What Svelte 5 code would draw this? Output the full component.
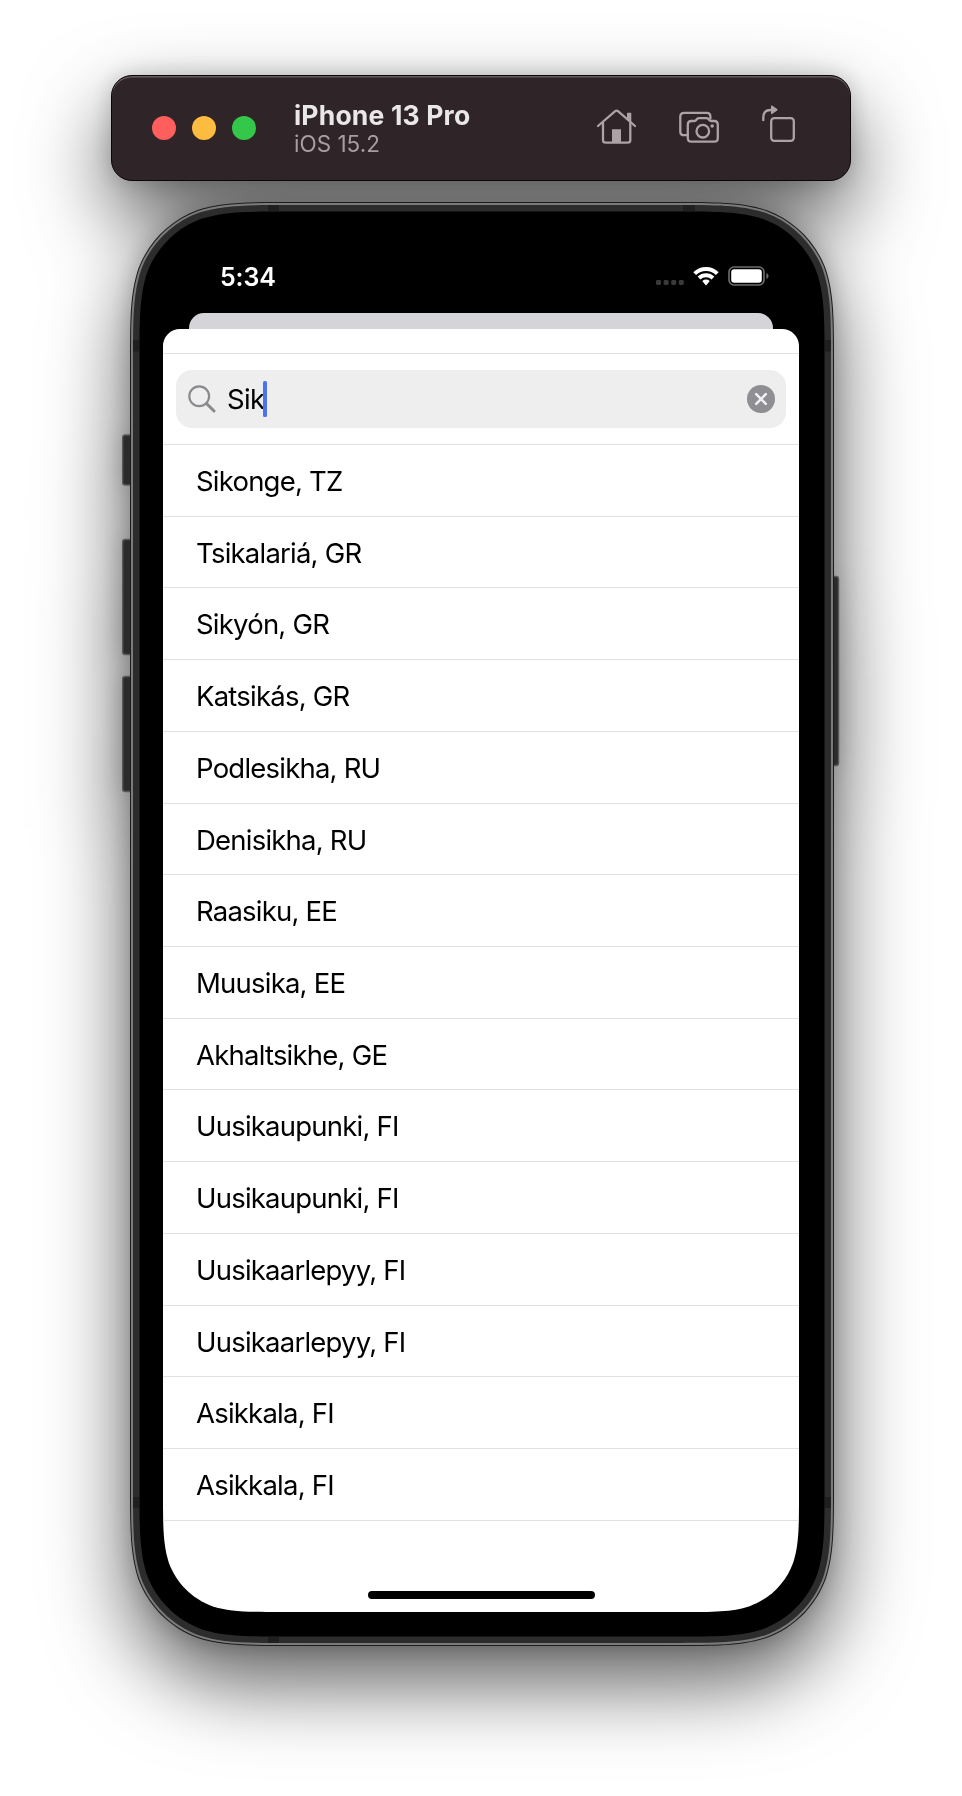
<script>
  // Continuous-curvature rounded rectangle, with one radius for the top corners and one for the bottom.
  function squircle(x, y, w, h, rt, rb = rt) {
    const R = x + w;
    const B = y + h;
    const A = 1.52866498, b = 1.08849296, c = 0.86840694, d = 0.63149379, e = 0.07491139, f = 0.37282383, g = 0.16905956;
    return [
      `M${x + A * rt} ${y}L${R - A * rt} ${y}`,
      `C${R - b * rt} ${y} ${R - c * rt} ${y} ${R - d * rt} ${y + e * rt}`,
      `C${R - f * rt} ${y + g * rt} ${R - g * rt} ${y + f * rt} ${R - e * rt} ${y + d * rt}`,
      `C${R} ${y + c * rt} ${R} ${y + b * rt} ${R} ${y + A * rt}`,
      `L${R} ${B - A * rb}`,
      `C${R} ${B - b * rb} ${R} ${B - c * rb} ${R - e * rb} ${B - d * rb}`,
      `C${R - g * rb} ${B - f * rb} ${R - f * rb} ${B - g * rb} ${R - d * rb} ${B - e * rb}`,
      `C${R - c * rb} ${B} ${R - b * rb} ${B} ${R - A * rb} ${B}`,
      `L${x + A * rb} ${B}`,
      `C${x + b * rb} ${B} ${x + c * rb} ${B} ${x + d * rb} ${B - e * rb}`,
      `C${x + f * rb} ${B - g * rb} ${x + g * rb} ${B - f * rb} ${x + e * rb} ${B - d * rb}`,
      `C${x} ${B - c * rb} ${x} ${B - b * rb} ${x} ${B - A * rb}`,
      `L${x} ${y + A * rt}`,
      `C${x} ${y + b * rt} ${x} ${y + c * rt} ${x + e * rt} ${y + d * rt}`,
      `C${x + g * rt} ${y + f * rt} ${x + f * rt} ${y + g * rt} ${x + d * rt} ${y + e * rt}`,
      `C${x + c * rt} ${y} ${x + b * rt} ${y} ${x + A * rt} ${y}Z`
    ].join('');
  }

  const layers = [
    { inset: 0, r: 107, fill: '#1c1c1c' },
    { inset: 1, r: 106, fill: '#7b7b7b' },
    { inset: 3, r: 104, fill: '#2c2c2c' },
    { inset: 9.5, r: 98, fill: '#000' }
  ];

  const bands = [
    [138, 3, 11, 6], [553, 3, 12, 6], [138, 1435, 11, 6],
    [3, 138, 6, 11.5], [695, 138, 6, 11.5], [3, 1295, 6, 11], [695, 1295, 6, 11]
  ];

  const buttons = [
    [-7.3, 233, 10, 50], [-7.3, 337.5, 10, 115], [-7.3, 474.5, 10, 115], [700, 374.5, 8.5, 189]
  ];

  const cities = [
    'Sikonge, TZ', 'Tsikalariá, GR', 'Sikyón, GR', 'Katsikás, GR', 'Podlesikha, RU',
    'Denisikha, RU', 'Raasiku, EE', 'Muusika, EE', 'Akhaltsikhe, GE', 'Uusikaupunki, FI',
    'Uusikaupunki, FI', 'Uusikaarlepyy, FI', 'Uusikaarlepyy, FI', 'Asikkala, FI', 'Asikkala, FI'
  ];

  const query = 'Sik';
</script>

<main class="desktop">
  <header class="toolbar">
    <div class="lights">
      <span class="light close"></span>
      <span class="light minimise"></span>
      <span class="light zoom"></span>
    </div>
    <div class="device">
      <h1>iPhone 13 Pro</h1>
      <p>iOS 15.2</p>
    </div>
    <div class="tools">
      <svg viewBox="0 0 48 48">
        <path d="M4 22 21.2 7.2Q22.6 6.1 24 7.2L41 22" />
        <path d="M9 19V36Q9 38.7 11.7 38.7H33.6Q36.3 38.7 36.3 36V19" />
        <path class="solid" d="M18 25.2H27V39H18ZM33 9.3Q33 8.8 33.5 8.8H36.8Q37.3 8.8 37.3 9.3V19L33 15.2Z" />
      </svg>
      <svg viewBox="0 0 48 48">
        <path d="M11.5 31.2H8.2Q4.3 31.2 4.3 27.4V12.5Q4.3 8.8 8.2 8.8H30.8Q34.4 8.8 34.4 12.5V14.6" />
        <path d="M15.4 17H18.2Q19.4 17 20.2 16L21 15Q21.8 14.1 23 14.1H30.4Q31.6 14.1 32.4 15L33.2 16Q34 17 35.2 17H38.2Q41.8 17 41.8 20.6V34Q41.8 37.7 38.2 37.7H15.4Q11.8 37.7 11.8 34V20.6Q11.8 17 15.4 17Z" />
        <circle cx="26.8" cy="27.2" r="6.3" />
        <circle class="solid" cx="36.2" cy="22" r="1.8" />
      </svg>
      <svg viewBox="0 0 48 48">
        <rect x="15.2" y="14.2" width="22.6" height="22.6" rx="3" />
        <path d="M7.3 16.2V13.6Q7.3 6 14.4 6H15.5" />
        <path class="solid" d="M15 2.1Q15 1 16 1.6L21.2 5.1Q22 5.8 21.2 6.5L16 10.1Q15 10.7 15 9.6Z" />
      </svg>
    </div>
  </header>

  <section class="phone">
    <svg class="frame" viewBox="0 0 704 1444">
      {#each buttons as [x, y, w, h]}
        <rect {x} {y} width={w} height={h} rx="2.5" fill="#2b2b2b" stroke="#585858" stroke-width="1.4" />
      {/each}
      {#each layers as l}
        <path d={squircle(l.inset, l.inset, 704 - 2 * l.inset, 1444 - 2 * l.inset, l.r)} fill={l.fill} />
      {/each}
      {#each bands as [x, y, w, h]}
        <rect {x} {y} width={w} height={h} fill="#1f1f1f" />
      {/each}
    </svg>

    <div class="screen" style:clip-path={`path('${squircle(0, 0, 636, 1376, 78)}')`}>
      <div class="status">
        <span class="time">5:34</span>
        <span class="signals">
          <svg class="cell" viewBox="0 0 28 5">
            {#each [0, 7.6, 15.2, 22.8] as x}
              <rect {x} y="0" width="5" height="5" rx="1.4" />
            {/each}
          </svg>
          <svg class="wifi" viewBox="0 0 26 20">
            <path d="M1.7 7.6A16.2 16.2 0 0 1 24.3 7.6" />
            <path d="M6 12A10 10 0 0 1 20 12" />
            <path class="core" d="M9.2 15Q13 12.2 16.8 15L13.5 18.9Q13 19.5 12.5 18.9Z" />
          </svg>
          <svg class="battery" viewBox="0 0 42 20">
            <rect class="shell" x="1" y="1" width="35" height="18" rx="5" />
            <rect class="charge" x="3.2" y="3.2" width="30.6" height="13.6" rx="3" />
            <path class="nub" d="M38.4 7Q40.6 8 40.6 10T38.4 13Z" />
          </svg>
        </span>
      </div>
      <div class="back-sheet"></div>
      <div class="sheet">
        <div class="grabber"></div>
        <div class="search">
          <div class="field">
            <svg class="lens" viewBox="0 0 28 28">
              <circle cx="11.2" cy="11.2" r="9.9" />
              <path d="M18.5 18.5 26 26" />
            </svg>
            <span class="query">{query}</span>
            <span class="caret"></span>
            <svg class="clear" viewBox="0 0 28 28">
              <circle cx="14" cy="14" r="14" />
              <path d="M9.2 9.2 18.8 18.8M18.8 9.2 9.2 18.8" />
            </svg>
          </div>
        </div>
        <ul>
          {#each cities as city}
            <li>{city}</li>
          {/each}
        </ul>
        <div class="home"></div>
      </div>
    </div>
  </section>
</main>

<style>
  :global(body) {
    margin: 0;
    background: #fff;
  }

  .desktop {
    box-sizing: border-box;
    width: 962px;
    height: 1796px;
    overflow: hidden;
    padding: 75px 111px 0;
    display: flex;
    flex-direction: column;
    gap: 21px;
    font-family: Inter, "Liberation Sans", sans-serif;
    filter: drop-shadow(0 0 11px rgba(0, 0, 0, 0.18)) drop-shadow(0 36px 41px rgba(0, 0, 0, 0.63));
  }

  .toolbar {
    box-sizing: border-box;
    width: 740px;
    height: 106px;
    flex: none;
    display: flex;
    align-items: center;
    padding: 0 46px 0 40px;
    border: 1px solid #080506;
    border-radius: 21px;
    background: #2f2427;
    box-shadow: inset 0 1.5px 0.5px #655c5f;
  }

  .lights {
    display: flex;
    gap: 16px;
  }

  .light {
    width: 24px;
    height: 24px;
    border-radius: 50%;
  }

  .close { background: #ff5f5c; }
  .minimise { background: #fdbb3f; }
  .zoom { background: #34c84a; }

  .device {
    margin-left: 38px;
    padding-top: 2px;
  }

  h1, p {
    margin: 0;
    white-space: nowrap;
  }

  h1 {
    font-size: 26.5px;
    line-height: 30px;
    font-weight: 700;
    letter-spacing: 0.18px;
    color: #e9e7e8;
  }

  p {
    font-size: 22.5px;
    line-height: 28px;
    color: #a89ea1;
  }

  .tools {
    margin-left: auto;
    display: flex;
    gap: 32px;
  }

  .tools svg {
    width: 48px;
    height: 48px;
    fill: none;
    stroke: #aea2a6;
    stroke-width: 2.3;
    stroke-linecap: round;
    stroke-linejoin: round;
  }

  .tools svg:first-child {
    margin-right: 2px;
  }

  .tools .solid {
    fill: #aea2a6;
    stroke: none;
  }

  .phone {
    position: relative;
    box-sizing: border-box;
    width: 704px;
    height: 1444px;
    flex: none;
    margin-left: 19px;
    padding: 34px 35px 34px 33px;
  }

  .frame {
    position: absolute;
    inset: 0;
    width: 704px;
    height: 1444px;
    overflow: visible;
  }

  .screen {
    position: relative;
    width: 636px;
    height: 1376px;
    display: flex;
    flex-direction: column;
    background: #000;
  }

  .status {
    height: 77px;
    flex: none;
    box-sizing: border-box;
    padding: 25px 29px 0 57px;
    display: flex;
    justify-content: space-between;
    color: #fff;
  }

  .time {
    font-size: 25px;
    line-height: 32px;
    font-weight: 600;
    letter-spacing: -0.1px;
  }

  .signals {
    display: flex;
    align-items: flex-start;
    padding-top: 5px;
  }

  .cell {
    width: 28px;
    height: 5px;
    margin: 14px 9px 0 0;
    fill: #3a3a3a;
  }

  .wifi {
    width: 26px;
    height: 20px;
    margin-right: 9px;
    fill: none;
    stroke: #fff;
    stroke-width: 4;
  }

  .wifi .core {
    fill: #fff;
    stroke: none;
  }

  .battery {
    width: 42px;
    height: 20px;
  }

  .shell {
    fill: none;
    stroke: #6e6e6e;
    stroke-width: 1.6;
  }

  .charge { fill: #fff; }
  .nub { fill: #6e6e6e; }

  .back-sheet {
    height: 16px;
    flex: none;
    margin: 0 26px;
    border-radius: 15px 15px 0 0;
    background: #d5d4d9;
  }

  .sheet {
    flex: 1;
    display: flex;
    flex-direction: column;
    border-radius: 17px 17px 0 0;
    background: #fff;
  }

  .grabber {
    height: 24px;
    flex: none;
  }

  .search {
    box-sizing: border-box;
    height: 92px;
    flex: none;
    padding: 16px 13px;
    border: solid #e1e1e1;
    border-width: 1px 0;
  }

  .field {
    height: 58px;
    box-sizing: border-box;
    display: flex;
    align-items: center;
    padding: 0 11px 0 12px;
    border-radius: 16px;
    background: #eeeeee;
  }

  .lens {
    width: 28px;
    height: 28px;
    fill: none;
    stroke: #8a8a8e;
    stroke-width: 2.2;
    stroke-linecap: round;
  }

  .lens path {
    stroke-width: 3;
  }

  .query {
    margin-left: 11px;
    width: 36px;
    font-size: 27.5px;
    line-height: 40px;
    letter-spacing: -0.6px;
    color: #000;
    white-space: nowrap;
  }

  .caret {
    width: 3.6px;
    height: 36px;
    border-radius: 1.5px;
    background: #4a72f2;
  }

  .clear {
    width: 28px;
    height: 28px;
    margin-left: auto;
    fill: #8e8e93;
  }

  .clear path {
    stroke: #f0f0f0;
    stroke-width: 2.6;
    stroke-linecap: round;
  }

  ul {
    margin: 0;
    padding: 0;
    list-style: none;
  }

  li {
    box-sizing: border-box;
    height: 71.73px;
    padding: 3px 0 0 33px;
    border-bottom: 1px solid #e1e1e1;
    font-size: 27.5px;
    line-height: 67px;
    letter-spacing: -0.78px;
    color: #000;
  }

  .home {
    width: 227px;
    height: 8px;
    margin: auto auto 13px;
    border-radius: 4px;
    background: #000;
  }
</style>
